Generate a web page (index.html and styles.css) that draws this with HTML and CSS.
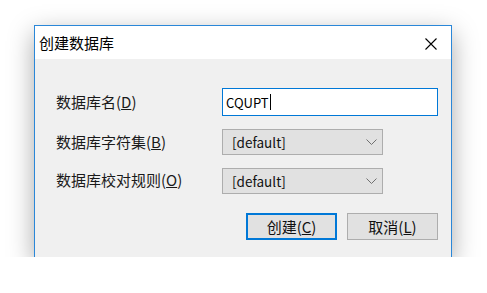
FILE: index.html
```html
<!doctype html>
<html>
  <head>
    <title>创建数据库</title>
    <meta charset="utf-8">
    <link rel="stylesheet" href="styles.css">
  </head>
  <body>
    <div class="window">
      <div class="titlebar">
        <span class="title">创建数据库</span>
        <span class="close">
          <svg width="12" height="12" viewBox="0 0 12 12">
            <path d="M0.5 0.5 L11.5 11.5 M11.5 0.5 L0.5 11.5" stroke="#000" stroke-width="1.1" fill="none"/>
          </svg>
        </span>
      </div>
      <div class="content">
        <form class="fields">
          <label class="label">数据库名(<u>D</u>)</label>
          <div class="input">CQUPT<span class="caret"></span></div>

          <label class="label">数据库字符集(<u>B</u>)</label>
          <div class="select">
            <span>[default]</span>
            <svg width="11" height="6" viewBox="0 0 11 6">
              <path d="M0.5 0.5 L5.5 5.5 L10.5 0.5" stroke="#707070" stroke-width="1" fill="none"/>
            </svg>
          </div>

          <label class="label">数据库校对规则(<u>O</u>)</label>
          <div class="select">
            <span>[default]</span>
            <svg width="11" height="6" viewBox="0 0 11 6">
              <path d="M0.5 0.5 L5.5 5.5 L10.5 0.5" stroke="#707070" stroke-width="1" fill="none"/>
            </svg>
          </div>
        </form>
        <div class="buttons">
          <button class="btn default">创建(<u>C</u>)</button>
          <button class="btn">取消(<u>L</u>)</button>
        </div>
      </div>
    </div>
  </body>
</html>
```

FILE: styles.css
```css
html, body {
  margin: 0;
  background: white;
}
body {
  padding: 25px 0 0 34px;
  font-family: "Noto Sans CJK SC", "Noto Sans", sans-serif;
  color: #000;
}
.window {
  width: 416px;
  border: 1px solid #2a87d8;
  border-bottom: 0;
  box-shadow: 0 8px 24px rgba(0, 0, 0, 0.34);
}
.titlebar {
  height: 33px;
  background: white;
  display: flex;
  align-items: center;
  justify-content: space-between;
  padding: 0 14px 0 4px;
}
.title {
  font-size: 15px;
  line-height: 1;
}
.close {
  display: flex;
  margin-top: 2px;
}
.content {
  background: #f0f0f0;
  height: 198px;
  padding: 29px 13px 0 21px;
  box-sizing: border-box;
}
.fields {
  display: grid;
  grid-template-columns: 166px auto;
  row-gap: 13px;
  align-items: center;
  margin: 0;
}
.label {
  font-size: 15px;
  line-height: 1;
  color: #1a1a1a;
  margin-top: -2px;
}
u {
  text-decoration-thickness: 1px;
  text-underline-offset: 1px;
}
.input {
  height: 28px;
  width: 216px;
  box-sizing: border-box;
  border: 1px solid #0078d7;
  background: white;
  font-size: 13px;
  display: flex;
  align-items: center;
  padding-left: 3px;
}
.caret {
  display: inline-block;
  width: 1px;
  height: 16px;
  background: #000;
  margin-left: 1px;
}
.select {
  height: 26px;
  width: 161px;
  box-sizing: border-box;
  border: 1px solid #adadad;
  background: #e1e1e1;
  font-size: 13.5px;
  display: flex;
  align-items: center;
  justify-content: space-between;
  padding: 0 5px 0 9px;
  color: #111;
}
.select + .label {
  margin-top: -3px;
}
.buttons {
  display: flex;
  justify-content: flex-end;
  gap: 10px;
  margin-top: 19px;
}
.btn {
  width: 91px;
  height: 27px;
  box-sizing: border-box;
  border: 1px solid #adadad;
  background: #e1e1e1;
  font: inherit;
  font-size: 15px;
  line-height: 1;
  padding: 0;
  color: #111;
}
.btn.default {
  border: 2px solid #0078d7;
}
```
